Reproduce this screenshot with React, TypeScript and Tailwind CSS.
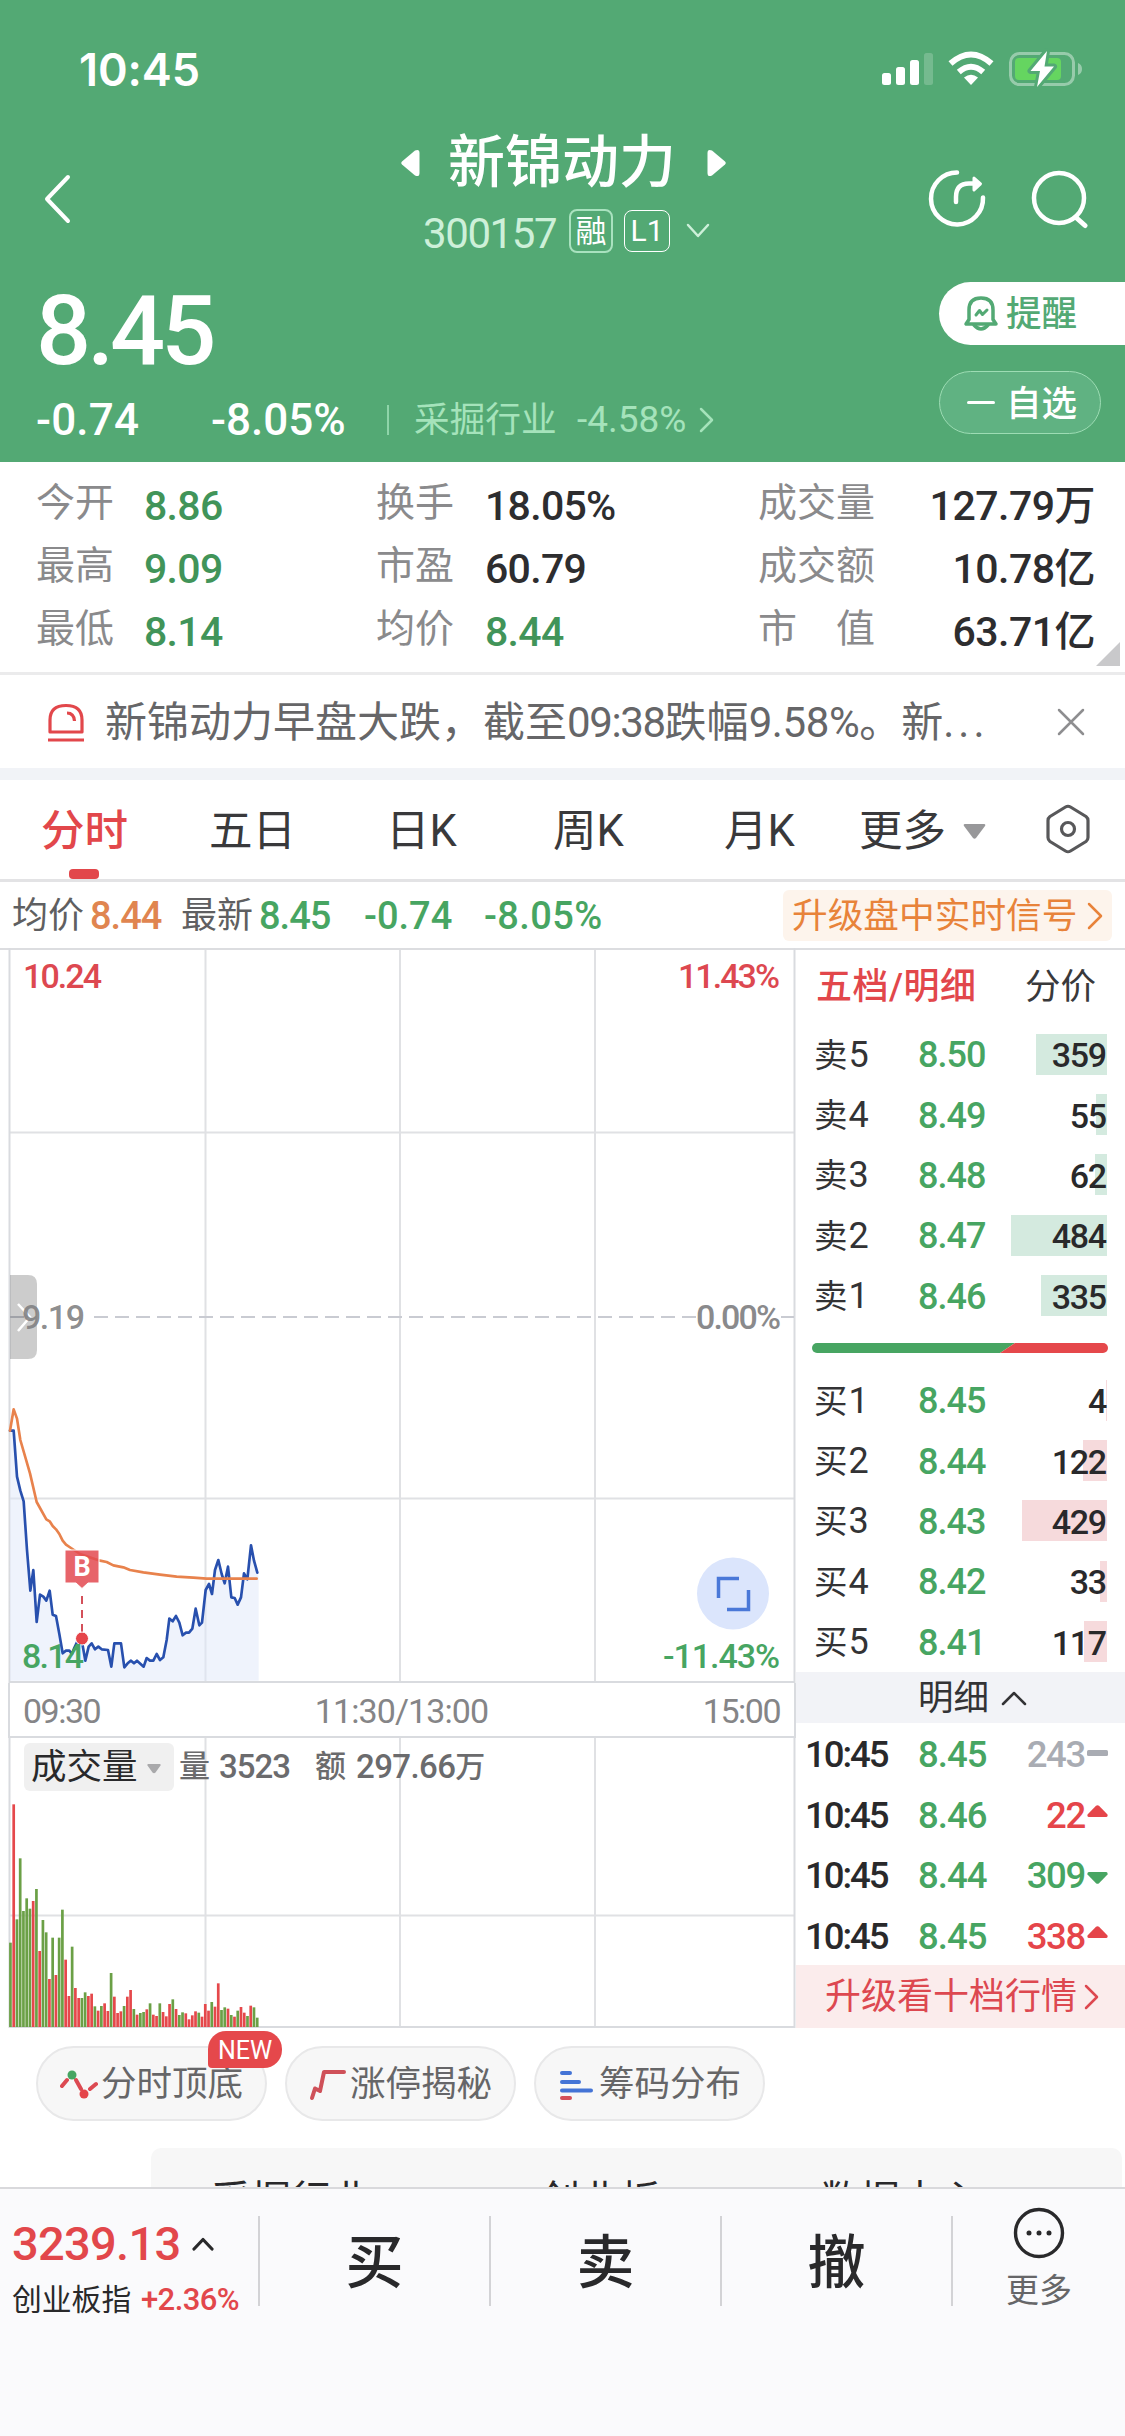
import React from "react";

type Level = { label: string; price: string; volume: number };
type Tick = { time: string; price: string; volume: number; dir: "up" | "down" | "flat" };

const sells: Level[] = [
  { label: "卖5", price: "8.50", volume: 359 },
  { label: "卖4", price: "8.49", volume: 55 },
  { label: "卖3", price: "8.48", volume: 62 },
  { label: "卖2", price: "8.47", volume: 484 },
  { label: "卖1", price: "8.46", volume: 335 },
];

const buys: Level[] = [
  { label: "买1", price: "8.45", volume: 4 },
  { label: "买2", price: "8.44", volume: 122 },
  { label: "买3", price: "8.43", volume: 429 },
  { label: "买4", price: "8.42", volume: 33 },
  { label: "买5", price: "8.41", volume: 117 },
];

const ticks: Tick[] = [
  { time: "10:45", price: "8.45", volume: 243, dir: "flat" },
  { time: "10:45", price: "8.46", volume: 22, dir: "up" },
  { time: "10:45", price: "8.44", volume: 309, dir: "down" },
  { time: "10:45", price: "8.45", volume: 338, dir: "up" },
];

// minute price and average line, in thirds of a pixel
const pricePoints =
  "30,182 41,182 51,320 61,362 71,394 81,540 91,662 100,600 110,756 120,674 130,680 139,692 149,662 158,734 168,738 178,792 188,850 198,842 208,842 216,852 222,836 234,810 246,815 256,872 266,830 275,820 285,838 295,830 305,838 324,840 334,890 343,820 363,820 373,892 383,880 393,872 402,880 411,872 431,890 440,864 450,872 460,872 470,852 480,870 490,862 500,810 508,746 518,754 528,738 538,758 548,796 558,788 567,788 577,776 587,716 598,766 606,758 617,660 627,642 636,672 645,600 655,570 665,612 674,640 684,590 694,682 704,684 713,704 723,682 732,610 742,628 753,526 762,572 772,608";
const avgPoints =
  "30,182 41,118 51,146 61,210 90,310 110,396 139,448 149,454 158,468 168,478 178,492 188,512 198,524 213,534 240,552 300,572 320,576 340,586 370,592 390,600 430,607 480,614 530,620 580,623 620,626 770,626";

// volume per minute: g = falling, r = rising
const volumes =
  "g253 r668 g323 g506 g348 g386 g355 r378 g414 r228 g321 g284 r144 g268 r156 g268 g352 r202 r93 g241 r117 r87 g87 g104 r93 r100 g62 r49 g63 r71 r48 g162 r91 r42 r47 g63 r91 r111 g54 r37 g42 g45 r53 g71 r37 r33 g71 r45 r32 r69 g83 r54 g36 g44 r41 r23 r35 r47 g43 r31 r69 r49 g75 r61 r131 g51 g59 r55 g36 r31 g49 r60 r43 g33 r64 g59 g28".split(" ");

function Chevron({ className, d, box, width = 3 }: { className: string; d: string; box: string; width?: number }) {
  return (
    <svg className={className} viewBox={box} fill="none" stroke="currentColor" strokeWidth={width} strokeLinecap="round" strokeLinejoin="round">
      <path d={d} />
    </svg>
  );
}

function StatusBar() {
  return (
    <div className="flex h-[138px] justify-between pl-[79px] pr-[41px] text-white">
      <span className="mt-[40px] font-[Inter] text-[45px] font-semibold leading-[60px] tracking-[-0.100px]">10:45</span>
      <svg className="mt-[48px] h-[42px] w-[204px]" viewBox="880 48 204 42">
        <g fill="#fff">
          <rect x="882" y="73" width="9" height="12" rx="2.5" />
          <rect x="896" y="67" width="9" height="18" rx="2.5" />
          <rect x="910" y="60" width="9" height="25" rx="2.5" />
          <rect x="924" y="53" width="9" height="32" rx="2.5" opacity=".2" />
          <path d="M971 85 L964 77.5 Q971 72 978 77.5Z" />
        </g>
        <g fill="none" stroke="#fff" strokeWidth="6">
          <path d="M950.5 63.5 Q971 45.500 991.500 63.500" />
          <path d="M958.800 72 Q971 61.500 983.200 72" />
        </g>
        <rect x="1010.500" y="53.500" width="63" height="31" rx="9" fill="none" stroke="#fff" strokeOpacity=".4" strokeWidth="3" />
        <path d="M1078 63 q4 1.500 4 6 q0 4.500 -4 6z" fill="#fff" fillOpacity=".4" />
        <rect x="1015" y="58" width="46" height="22" rx="4" fill="#65d560" />
        <path d="M1047 51 L1030.500 71 h9.500 L1037 87 L1054 66.500 h-9.500 Z" fill="#fff" stroke="#53a974" strokeWidth="6" paintOrder="stroke" strokeLinejoin="round" />
      </svg>
    </div>
  );
}

function TitleBar() {
  return (
    <div className="flex h-[144px] text-white">
      <div className="w-[401px] pl-[44px] pt-[35px]">
        <Chevron className="h-[52px] w-[28px]" box="0 0 28 52" d="M24 4 L3 26 L24 48" width={4} />
      </div>
      <div className="w-[325px]">
        <div className="flex h-[50px] items-center justify-between">
          <svg className="h-[28px] w-[19px]" viewBox="0 0 19 28" fill="#fff">
            <path d="M1 12.500 L14 1.500 Q18.500 -.5 18.500 4 V24 Q18.500 28.500 14 26.500 L1 15.500 Q-.5 14 1 12.500Z" />
          </svg>
          <span className="-ml-[3px] text-[57px] font-medium leading-[56px]">新锦动力</span>
          <svg className="h-[28px] w-[19px] rotate-180" viewBox="0 0 19 28" fill="#fff">
            <path d="M1 12.500 L14 1.500 Q18.500 -.5 18.500 4 V24 Q18.500 28.500 14 26.500 L1 15.500 Q-.5 14 1 12.500Z" />
          </svg>
        </div>
        <div className="mt-[20px] flex h-[46px] items-center pl-[22px] text-[#cdf0d9]">
          <span className="w-[146px] pt-[5px] text-[42px] leading-[46px] tracking-[-1.400px]">300157</span>
          <span className="h-[44px] w-[44px] rounded-lg border-2 border-[#a9e2bf] text-center text-[31px] leading-[42px] text-white">融</span>
          <span className="ml-[11px] h-[42px] w-[46px] rounded-lg border-[1.5px] border-white text-center text-[30px] leading-[40px] text-white">L1</span>
          <Chevron className="ml-[15px] h-[18px] w-[26px]" box="0 0 26 18" d="M3 3 L13 14 L23 3" width={2.5} />
        </div>
      </div>
      <svg className="ml-[200px] mt-[29px] h-[62px] w-[166px]" viewBox="926 167 166 62" fill="none" stroke="#fff" strokeWidth="4.500" strokeLinecap="round" strokeLinejoin="round">
        <path d="M957 172.500 A26 26 0 1 0 983 197.500" />
        <path d="M956 202 V197 Q956 183.500 969 183.500 H978" />
        <path d="M974 178 L980.500 183.800 L974 190 Z" fill="#fff" strokeWidth="3" />
        <circle cx="1059" cy="198" r="25" />
        <path d="M1076 217.500 L1085 225.500" strokeWidth="5" />
      </svg>
    </div>
  );
}

function Header() {
  return (
    <header className="h-[462px] bg-[#53a974]">
      <StatusBar />
      <TitleBar />
      <div className="flex h-[180px] justify-between text-white">
        <div className="pl-[36px]">
          <div className="h-[97px] text-[97px] font-medium leading-[98px] tracking-[-4px]">8.45</div>
          <div className="mt-[19px] flex h-[44px] items-center">
            <span className="w-[175px] text-[44px] font-medium leading-[44px] tracking-[0.200px]">-0.74</span>
            <span className="w-[176px] text-[44px] font-medium leading-[44px]">-8.05%</span>
            <span className="h-[30px] w-0.5 bg-[#8fd4a9]" />
            <span className="ml-[25px] w-[163px] whitespace-nowrap text-[35.700px] leading-[44px] text-[#a5e3bb]">采掘行业</span>
            <span className="w-[121px] text-[37px] leading-[44px] text-[#a5e3bb]">-4.58%</span>
            <Chevron className="h-[28px] w-[18px] text-[#a5e3bb]" box="0 0 18 28" d="M3 3 L14 14 L3 25" width={2.5} />
          </div>
        </div>
        <div className="w-[186px]">
          <div className="flex h-[63px] items-center rounded-l-full bg-white pl-[24px] text-[#53a974]">
            <svg className="h-[38px] w-[36px]" viewBox="0 0 36 38" fill="none" stroke="currentColor" strokeWidth="3.500" strokeLinecap="round" strokeLinejoin="round">
              <path d="M3 29 H33 L30 24.500 V15 Q30 3 18 3 Q6 3 6 15 V24.500 Z" />
              <path d="M11 30 Q18 38 25 30" />
              <path d="M13 20 L16.500 15.500 L19.500 19.500 L24 15" strokeWidth="3" />
            </svg>
            <span className="ml-[7px] pt-[2px] text-[35.500px] font-medium leading-[61px]">提醒</span>
          </div>
          <div className="mt-[26px] flex h-[63px] w-[162px] items-center rounded-full border-[1.5px] border-[#9ddcb4] bg-[#60b282] pl-[27px]">
            <span className="h-[3.500px] w-[28px] rounded-full bg-white" />
            <span className="ml-[11px] pt-[2px] text-[35.500px] font-medium leading-[60px]">自选</span>
          </div>
        </div>
      </div>
    </header>
  );
}

const stats = [
  ["今开", "8.86", "换手", "18.05%", "成交量", "127.79万"],
  ["最高", "9.09", "市盈", "60.79", "成交额", "10.78亿"],
  ["最低", "8.14", "均价", "8.44", "市　值", "63.71亿"],
];

function Stats() {
  return (
    <section className="relative h-[213px] border-b-[3px] border-[#ebebec] pt-[11px]">
      {stats.map((row, i) => (
        <div key={i} className="flex h-[63px] items-center whitespace-nowrap pl-[36px] text-[41px] font-medium leading-[62px] text-[#2d2d2f]">
          <span className="w-[108px] pb-[3px] text-[39px] font-normal text-[#8a8a8c]">{row[0]}</span>
          <span className="w-[232px] pt-[2px] tracking-[-0.700px] text-[#419459]">{row[1]}</span>
          <span className="w-[109px] pb-[3px] text-[39px] font-normal text-[#8a8a8c]">{row[2]}</span>
          <span className={i === 2 ? "w-[273px] pt-[2px] tracking-[-0.700px] text-[#419459]" : "w-[273px] pt-[2px] tracking-[-0.700px]"}>{row[3]}</span>
          <span className="w-[130px] pb-[3px] text-[39px] font-normal text-[#8a8a8c]">{row[4]}</span>
          <span className="w-[207px] pt-[2px] text-right tracking-[-0.500px]">{row[5]}</span>
        </div>
      ))}
      <svg className="absolute right-[5px] top-[180px] h-[24px] w-[24px]" viewBox="0 0 24 24">
        <path d="M24 0 V24 H0Z" fill="#c9c9cb" />
      </svg>
    </section>
  );
}

function News() {
  return (
    <section className="flex h-[105px] items-center border-b-[12px] border-[#f1f3f7] pl-[46px]">
      <svg className="h-[40px] w-[40px]" viewBox="0 0 40 40" fill="none" stroke="#e2474b" strokeWidth="3.200">
        <path d="M4 30 V18 Q4 3.500 20 3.500 Q36 3.500 36 18 V30 Z" strokeLinejoin="round" />
        <path d="M2 38 H38 M21 11 Q28 11 28.500 19" />
      </svg>
      <span className="ml-[19px] w-[952px] whitespace-nowrap pt-[2px] text-[42px] leading-[60px] text-[#666668]">
        新锦动力早盘大跌，截至<span className="tracking-[-1.400px]">09:38</span>跌幅<span className="tracking-[-0.400px]">9.58%</span>。新<span className="tracking-[4px]">...</span>
      </span>
      <Chevron className="h-[28px] w-[28px] text-[#8e8e90]" box="0 0 28 28" d="M2 2 L26 26 M26 2 L2 26" width={2.5} />
    </section>
  );
}

function Tabs() {
  return (
    <nav className="flex h-[102px] border-b-[3px] border-[#e3e3e5] text-[43.500px] leading-[103px] text-[#39393b]">
      <div className="relative w-[167px] pl-[41px] font-medium text-[#e2474b]">
        分时
        <span className="absolute bottom-0 left-[69px] h-[10px] w-[30px] rounded-[4px] bg-[#e2474b]" />
      </div>
      <span className="w-[176px] pl-[42px]">五日</span>
      <span className="w-[170px] pl-[43px]">日K</span>
      <span className="w-[170px] pl-[40px]">周K</span>
      <span className="w-[176px] pl-[41px]">月K</span>
      <span>更多</span>
      <svg className="ml-[17px] mt-[44px] h-[15px] w-[23px]" viewBox="0 0 23 15">
        <path d="M2 0 H21 Q23 0 22 2 L13 14 Q11.500 15.500 10 14 L1 2 Q0 0 2 0Z" fill="#98989a" />
      </svg>
      <svg className="ml-[59px] mt-[24px] h-[50px] w-[46px]" viewBox="0 0 46 50" fill="none" stroke="#58585a" strokeWidth="3.200" strokeLinejoin="round">
        <path d="M20.500 3 Q23 1.500 25.500 3 L41 12.500 Q43 14 43 16.500 V33.500 Q43 36 41 37.500 L25.500 47 Q23 48.500 20.500 47 L5 37.500 Q3 36 3 33.500 V16.500 Q3 14 5 12.500Z" />
        <circle cx="23" cy="25" r="6.500" />
      </svg>
    </nav>
  );
}

function Summary() {
  return (
    <div className="flex h-[66px] items-center whitespace-nowrap pl-[12px] pt-[1px] text-[38px] leading-[66px] text-[#47a562]">
      <span className="w-[78px] text-[36px] text-[#5f5f61]">均价</span>
      <span className="w-[91px] font-medium tracking-[-1px] text-[#e08550]">8.44</span>
      <span className="w-[78px] text-[36px] text-[#5f5f61]">最新</span>
      <span className="w-[105px] font-medium tracking-[-1px]">8.45</span>
      <span className="w-[120px] font-medium">-0.74</span>
      <span className="w-[299px] font-medium tracking-[0.400px]">-8.05%</span>
      <span className="flex h-[51px] w-[329px] items-center rounded-[6px] bg-[#fdf4ec] pl-[9px] text-[35.700px] leading-[50px] text-[#e8833a]">
        升级盘中实时信号
        <Chevron className="ml-[8px] h-[28px] w-[18px]" box="0 0 18 28" d="M3 2 L15 14 L3 26" width={2.5} />
      </span>
    </div>
  );
}

function PriceChart() {
  return (
    <svg className="block h-[735px] w-[796px]" viewBox="0 948 796 735" fontSize="34" fontWeight="500">
      <g stroke="#e0e1e4" strokeWidth="2">
        <path d="M205.500 950 V1682 M400 950 V1682 M595 950 V1682 M10 1132.500 H794 M10 1498.500 H794" />
        <path d="M9.500 948 V1683 M794.500 948 V1683 M9 1682 H795" stroke="#d9dbdf" />
      </g>
      <path d="M10 1317 H24 M94 1317 H696 M781 1317 H794" stroke="#c9cbd2" strokeWidth="2" strokeDasharray="14 7" />
      <g transform="translate(0 1370) scale(.33333)" fill="none" strokeWidth="8" strokeLinejoin="round" strokeLinecap="round">
        <polygon points={`${pricePoints} 776,620 776,932 30,932`} fill="#dfe8f9" fillOpacity=".5" />
        <polyline points={pricePoints} stroke="#2850ae" />
        <polyline points={avgPoints} stroke="#e8824c" />
      </g>
      <path d="M82 1596 V1638" stroke="#d4505a" strokeWidth="2" strokeDasharray="8 6" />
      <path d="M65 1550 H99 V1583 H88 L82 1588.500 L76 1583 H65Z" fill="#e34a52" fillOpacity=".86" stroke="#fff" strokeWidth="1" />
      <text x="82" y="1576" textAnchor="middle" fill="#fff" fontSize="27" fontWeight="700">B</text>
      <circle cx="82" cy="1638.500" r="6.500" fill="#e5454a" stroke="#fff" strokeWidth="1" />
      <path d="M10 1275 H28 Q37 1275 37 1284 V1350 Q37 1359 28 1359 H10Z" fill="#000" fillOpacity=".2" />
      <path d="M18 1304 L30 1317 L18 1331" fill="none" stroke="#fff" strokeWidth="2.500" />
      <text x="23" y="988" fill="#dd4850" textLength="79">10.24</text>
      <text x="678" y="988" fill="#dd4850" textLength="102">11.43%</text>
      <text x="22" y="1329" fill="#7f7f81" fillOpacity=".9" textLength="63">9.19</text>
      <text x="696" y="1329" fill="#8a8a8c" textLength="85">0.00%</text>
      <text x="22" y="1668" fill="#47a562" textLength="62">8.14</text>
      <text x="663" y="1668" fill="#47a562" textLength="117">-11.43%</text>
      <circle cx="733" cy="1593.500" r="36" fill="#dbe5fc" />
      <path d="M718.500 1598 V1578.500 H739 M748.500 1590 V1609.500 H727" fill="none" stroke="#4a78d8" strokeWidth="3.500" />
    </svg>
  );
}

function VolumeChart() {
  return (
    <div className="relative h-[290px]">
      <svg className="block h-[290px] w-[796px]" viewBox="0 1738 796 290">
        <g stroke="#e0e1e4" strokeWidth="2">
          <path d="M205.500 1738 V2027 M400 1738 V2027 M595 1738 V2027 M10 1915.500 H794" />
          <path d="M9.500 1738 V2028 M794.500 1738 V2028 M9 2027 H795" stroke="#d9dbdf" />
        </g>
        {volumes.map((v, i) => (
          <rect
            key={i}
            x={9.1 + i * 3.247}
            y={2027 - Number(v.slice(1)) / 3}
            width="2.700"
            height={Number(v.slice(1)) / 3}
            fill={v[0] === "g" ? "#6ba046" : "#e5484b"}
          />
        ))}
      </svg>
      <div className="absolute left-[24px] top-[5px] flex h-[48px] items-center whitespace-nowrap text-[33px] font-medium leading-[48px] text-[#6b6b6d]">
        <span className="flex h-[48px] w-[150px] items-center rounded-[6px] bg-[#f0f0f0] pl-[7px] text-[35.500px] font-normal leading-[44px] text-[#29292b]">
          <span>成交量</span>
          <svg className="ml-[9px] mt-[4px] h-[10px] w-[14px]" viewBox="0 0 14 10">
            <path d="M1 0 H13 Q14 0 13.500 1.500 L8.500 8.500 Q7 10 5.500 8.500 L.5 1.500 Q0 0 1 0Z" fill="#a9a9ab" />
          </svg>
        </span>
        <span className="ml-[5px] w-[40px] text-[31px]">量</span>
        <span className="w-[96px] tracking-[-1px]">3523</span>
        <span className="w-[41px] text-[31px]">额</span>
        <span className="tracking-[-0.600px]">297.66</span>
        <span className="text-[30px]">万</span>
      </div>
    </div>
  );
}

function BookRow({ row, side }: { row: Level; side: "sell" | "buy" }) {
  return (
    <div className="flex h-[60.400px] items-center leading-[60px]">
      <span className="w-[106px] pl-[18px] pt-[2px] text-[33.500px] text-[#333335]">
        {row.label[0]}
        <span className="ml-[1px] text-[36px]">{row.label[1]}</span>
      </span>
      <span className="w-[96px] pl-[16px] pt-[2px] text-[36px] font-medium tracking-[-1px] text-[#47a562]">{row.price}</span>
      <div className="relative flex h-[41px] w-[109px] items-center justify-end">
        <div
          className={side === "sell" ? "absolute right-0 h-[41px] bg-[#d4eadf]" : "absolute right-0 h-[41px] bg-[#f6dadc]"}
          style={{ width: Math.max(1, row.volume * 0.198) }}
        />
        <span className="relative pr-[1px] pt-[2px] text-[34px] font-medium tracking-[-1.200px] text-[#29292b]">{row.volume}</span>
      </div>
    </div>
  );
}

function TickRow({ tick }: { tick: Tick }) {
  const color = tick.dir === "up" ? "text-[#e5454a]" : tick.dir === "down" ? "text-[#47a562]" : "text-[#a9acb3]";
  return (
    <div className="flex h-[60.500px] items-center pt-[3px] text-[36.500px] font-medium leading-[57px]">
      <span className="w-[110px] pl-[9px] tracking-[-2px] text-[#29292b]">{tick.time}</span>
      <span className="w-[92px] pl-[12px] tracking-[-1px] text-[#47a562]">{tick.price}</span>
      <span className={`flex w-[110px] items-center justify-end tracking-[-1.300px] ${color}`}>
        {tick.volume}
        <svg className="ml-[2px] h-[20px] w-[21px]" viewBox="0 0 21 20" fill="currentColor">
          {tick.dir === "flat" && <rect x="0" y="5" width="21" height="6" rx="1.500" />}
          {tick.dir === "up" && <path d="M9 .8 Q10.500 -.4 12 .8 L20.500 9.500 Q21 12 19 12 H2 Q0 12 .5 9.500Z" />}
          {tick.dir === "down" && <path d="M9 17.200 Q10.500 18.400 12 17.200 L20.500 8.500 Q21 6 19 6 H2 Q0 6 .5 8.500Z" />}
        </svg>
      </span>
    </div>
  );
}

function OrderBook() {
  return (
    <aside className="w-[329px]">
      <div className="flex h-[74px] items-center pl-[20px] text-[36px] leading-[70px]">
        <span className="w-[209px] font-medium tracking-[0.500px] text-[#e2474b]">五档/明细</span>
        <span className="text-[35.500px] text-[#39393b]">分价</span>
      </div>
      {sells.map((row) => (
        <BookRow key={row.label} row={row} side="sell" />
      ))}
      <div className="flex h-[44px] items-center pl-[16px]">
        <svg className="h-[10px] w-[296px]" viewBox="0 0 296 10">
          <path d="M5 0 H203 L188 10 H5 A5 5 0 0 1 5 0Z" fill="#47a562" />
          <path d="M203 0 H291 A5 5 0 0 1 291 10 H188Z" fill="#e5484b" />
        </svg>
      </div>
      {buys.map((row) => (
        <BookRow key={row.label} row={row} side="buy" />
      ))}
      <div className="flex h-[51px] items-center bg-[#f2f3f7] pl-[122px] pt-[2px] text-[35.500px] leading-[49px] text-[#333335]">
        明细
        <Chevron className="ml-[12px] h-[16px] w-[26px]" box="0 0 26 16" d="M2 14 L13 3 L24 14" width={2.5} />
      </div>
      {ticks.map((tick, i) => (
        <TickRow key={i} tick={tick} />
      ))}
      <div className="flex h-[63px] items-center bg-[#fbecec] pl-[29px] pt-[2px] text-[36px] leading-[61px] text-[#dd4850]">
        升级看十档行情
        <Chevron className="ml-[7px] h-[26px] w-[16px]" box="0 0 16 26" d="M2 2 L13 13 L2 24" width={2.5} />
      </div>
    </aside>
  );
}

function Pill({ text, icon }: { text: string; icon: React.ReactNode }) {
  return (
    <div className="flex h-[75px] w-[231px] items-center rounded-full border-2 border-[#e8e8e9] bg-[#f7f7f7] pl-[22px] text-[35.500px] leading-[72px] text-[#666668]">
      <svg className="mr-[3px] h-[40px] w-[38px] shrink-0" viewBox="0 0 38 40" fill="none" strokeWidth="4" strokeLinecap="round" strokeLinejoin="round">
        {icon}
      </svg>
      <span className="whitespace-nowrap pt-[1px]">{text}</span>
    </div>
  );
}

function Tools() {
  return (
    <div className="flex h-[159px] flex-col">
      <div className="flex gap-[18px] pl-[36px] pt-[18px]">
        <div className="relative">
          <Pill
            text="分时顶底"
            icon={
              <>
                <path d="M2 22 L7 16 M16 16 L21 25 M30 25 L36 20" stroke="#dc4a52" />
                <circle cx="12" cy="11" r="4.500" fill="#47a562" />
                <circle cx="24" cy="30" r="4.500" fill="#e5454a" />
              </>
            }
          />
          <span className="absolute left-[172px] top-[-15px] h-[37px] w-[74px] rounded-[18px] rounded-bl-[4px] bg-[#e5484b] text-center text-[25px] leading-[39px] text-white">NEW</span>
        </div>
        <Pill text="涨停揭秘" icon={<path d="M3 34 L6 24.500 L11 27 L15 8 H35" stroke="#cf5159" />} />
        <Pill
          text="筹码分布"
          icon={
            <>
              <path d="M4 9 H12 M4 18 H21 M4 26.500 H33" stroke="#4474d6" />
              <path d="M4 34 H12" stroke="#d4505a" />
            </>
          }
        />
      </div>
      <div className="ml-[151px] mr-[3px] mt-[27px] flex h-[39px] overflow-hidden whitespace-nowrap rounded-t-[10px] bg-[#f7f7f7] pl-[60px] text-[40px] leading-[106px] text-[#29292b]">
        <span className="w-[329px] shrink-0">采掘行业</span>
        <span className="w-[280px] shrink-0">创业板</span>
        <span className="w-[291px] shrink-0">数据中心</span>
        <span className="shrink-0">个股</span>
      </div>
    </div>
  );
}

function BottomBar() {
  return (
    <footer className="flex h-[249px] border-t-2 border-[#d9d9dc] bg-[#fafafc]">
      <div className="w-[258px] pl-[12px] pt-[30px]">
        <div className="flex h-[50px] items-center text-[47px] font-medium leading-[50px] tracking-[-0.700px] text-[#e2474b]">
          <span className="w-[179px]">3239.13</span>
          <Chevron className="h-[14px] w-[24px] text-[#29292b]" box="0 0 24 14" d="M3 12 L12 2.500 L21 12" width={3.2} />
        </div>
        <div className="mt-[10px] flex h-[42px] items-center whitespace-nowrap text-[29.800px] leading-[42px] text-[#29292b]">
          <span className="w-[129px]">创业板指</span>
          <span className="text-[31px] font-medium tracking-[-0.600px] text-[#e2474b]">+2.36%</span>
        </div>
      </div>
      {["买", "卖", "撤"].map((t) => (
        <div key={t} className="mt-[27px] h-[90px] w-[231px] border-l-2 border-[#d3d3d6] text-center text-[58px] font-medium leading-[94px] text-[#29292b]">
          {t}
        </div>
      ))}
      <div className="mt-[27px] flex h-[90px] w-[174px] flex-col items-center border-l-2 border-[#d3d3d6] text-[33px] text-[#666668]">
        <svg className="-mt-[9px] h-[52px] w-[52px] shrink-0" viewBox="0 0 52 52" fill="none" stroke="#29292b" strokeWidth="3.400">
          <circle cx="26" cy="26" r="23.500" />
          <path d="M16 26 h.01 M26 26 h.01 M36 26 h.01" strokeWidth="5" strokeLinecap="round" />
        </svg>
        <span className="mt-[11px] leading-[42px]">更多</span>
      </div>
    </footer>
  );
}

export default function App() {
  return (
    <div className="flex h-[2436px] w-[1125px] flex-col overflow-hidden bg-white font-[Roboto,'Noto_Sans_CJK_SC',sans-serif]">
      <Header />
      <Stats />
      <News />
      <Tabs />
      <Summary />
      <div className="flex h-[1080px] border-t-2 border-[#dcdde0]">
        <div className="-mt-[2px] w-[796px]">
          <PriceChart />
          <div className="ml-[8px] flex h-[55px] w-[788px] justify-between border-x-2 border-b-2 border-[#d9dbdf] pl-[13px] pr-[14px] text-[34px] leading-[56px] text-[#858587]">
            <span className="tracking-[-1.500px]">09:30</span>
            <span className="tracking-[-0.900px]">11:30/13:00</span>
            <span className="tracking-[-1.500px]">15:00</span>
          </div>
          <VolumeChart />
        </div>
        <OrderBook />
      </div>
      <Tools />
      <BottomBar />
    </div>
  );
}
